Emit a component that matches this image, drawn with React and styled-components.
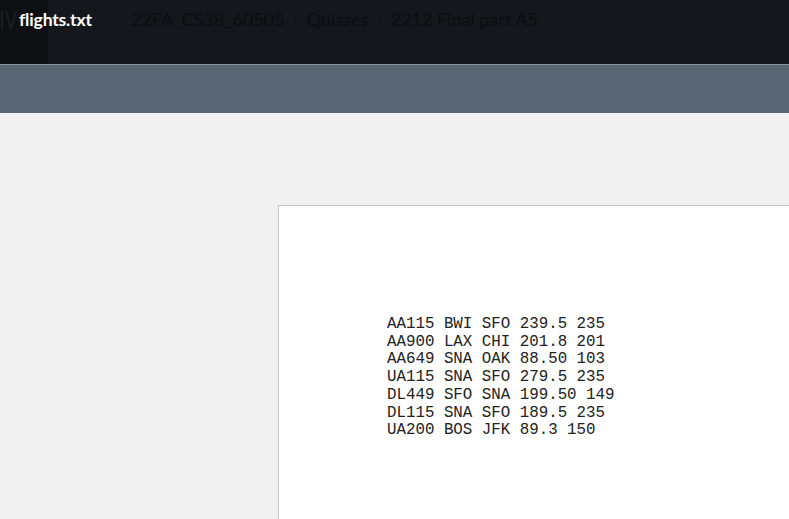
import React from "react";
import styled, { createGlobalStyle } from "styled-components";

const Global = createGlobalStyle`
  html, body { margin: 0; padding: 0; height: 100%; overflow: hidden; background: #f1f1f1; }
  #root { height: 100%; }
`;

const Page = styled.div`
  position: relative;
  width: 100%;
  height: 100%;
  display: flex;
  flex-direction: column;
  font-family: Lato, "Open Sans", sans-serif;
`;

const TopBar = styled.header`
  height: 64px;
  background: #14171c;
  display: flex;
  align-items: stretch;
  border-bottom: 1px solid #8c9196;
  flex-shrink: 0;
`;

const NavBlock = styled.div`
  width: 48px;
  background: #0e1013;
  flex-shrink: 0;
  display: flex;
  align-items: flex-start;
  padding-top: 10px;
  box-sizing: border-box;
`;

const Crumbs = styled.nav`
  display: flex;
  align-items: flex-start;
  gap: 9px;
  padding: 5px 0 0 83px;
  font-size: 18px;
  color: #0b0d10;
  white-space: nowrap;
`;

const Sep = styled.span`
  font-size: 14px;
  line-height: 28px;
`;

const Crumb = styled.span`
  line-height: 28px;
`;

const Title = styled.div`
  position: absolute;
  left: 19px;
  top: 9px;
  font-family: Lato, sans-serif;
  font-weight: 700;
  font-size: 17.6px;
  color: #ffffff;
  letter-spacing: -0.2px;
`;

const SubBar = styled.div`
  height: 48px;
  background: #576672;
  flex-shrink: 0;
`;

const Main = styled.main`
  flex: 1;
  padding: 92px 0 0 278px;
  background: #f1f1f1;
  overflow: hidden;
`;

const Doc = styled.div`
  width: 560px;
  height: 400px;
  background: #ffffff;
  border: 1px solid #c6c6cb;
  padding: 110px 0 0 108px;
  box-sizing: border-box;
`;

const Pre = styled.pre`
  margin: 0;
  font-family: "Liberation Mono", "Courier New", monospace;
  font-size: 15.8px;
  line-height: 17.7px;
  color: #222222;
`;

const lines = [
  "AA115 BWI SFO 239.5 235",
  "AA900 LAX CHI 201.8 201",
  "AA649 SNA OAK 88.50 103",
  "UA115 SNA SFO 279.5 235",
  "DL449 SFO SNA 199.50 149",
  "DL115 SNA SFO 189.5 235",
  "UA200 BOS JFK 89.3 150",
];

function FaintLogo() {
  return (
    <svg width="48" height="20" viewBox="0 0 48 20" fill="none" stroke="#1a1e23" strokeWidth="2">
      <path d="M2 1v18M6 1l5 18 5-18" />
    </svg>
  );
}

export default function App() {
  return (
    <>
      <Global />
      <Page>
        <TopBar>
          <NavBlock>
            <FaintLogo />
          </NavBlock>
          <Crumbs>
            <Crumb>22FA_CS38_60505</Crumb>
            <Sep>›</Sep>
            <Crumb>Quizzes</Crumb>
            <Sep>›</Sep>
            <Crumb>2212 Final part A5</Crumb>
          </Crumbs>
        </TopBar>
        <SubBar />
        <Main>
          <Doc>
            <Pre>{lines.join("\n")}</Pre>
          </Doc>
        </Main>
        <Title>flights.txt</Title>
      </Page>
    </>
  );
}
